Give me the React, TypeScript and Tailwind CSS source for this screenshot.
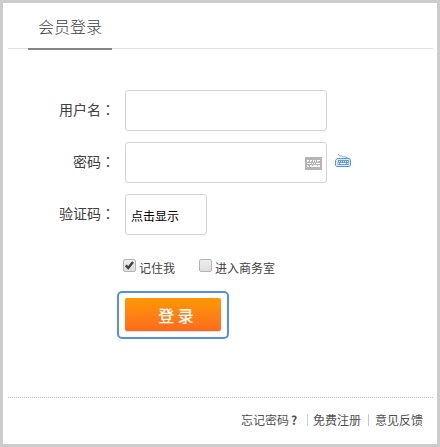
import { useState, type ReactNode } from 'react';

interface FieldProps {
  label: string;
  children: ReactNode;
}

function Field({ label, children }: FieldProps) {
  return (
    <div className="flex h-[41px] items-center">
      <span className="mr-[10px] w-[107px] pb-[4px] text-right text-[14px] leading-5 whitespace-nowrap">
        {label}
        <span lang="zh-TW" className="font-['Noto_Sans_CJK_TC',sans-serif]">：</span>
      </span>
      {children}
    </div>
  );
}

function PadIcon() {
  return (
    <svg width="17" height="13" viewBox="0 0 17 13" shapeRendering="crispEdges" className="mt-[2px]">
      <rect width="17" height="13" fill="#b5b5b5" />
      <path
        d="M2 3.5h2m1 0h2m1 0h1m1 0h1m1 0h3M2 4.5h1m2 0h1m2 0h1m1 0h1m1 0h1M2 6.5h4m1 0h1m1 0h1m1 0h4M2 9.5h2m1 0h10M2 8.5h1m2 0h2m1 0h4m1 0h2"
        stroke="#fff"
        fill="none"
      />
    </svg>
  );
}

function KeyboardIcon() {
  return (
    <svg width="17" height="14" viewBox="0 0 17 14">
      <path d="M3.5 0v1l1.5 1h2l1.5 1h2.500l1 .5v1" stroke="#76a9dd" fill="none" />
      <path d="M2 4.5h12.500l1 1.500v5l-1 1.500h-13l-1-1v-5z" fill="#dcebfb" stroke="#5b94d6" />
      <path d="M3 6h11l-.5 5h-11z" fill="#6699d6" />
      <path d="M4 7.500h1m1 0h1m1 0h1m1 0h1m1 0h1M3 9.500h1m1 0h6m1 0h1" stroke="#f3f9ff" fill="none" shapeRendering="crispEdges" />
    </svg>
  );
}

interface CheckProps {
  label: string;
  checked: boolean;
  onToggle: () => void;
}

function Check({ label, checked, onToggle }: CheckProps) {
  return (
    <button type="button" role="checkbox" aria-checked={checked} onClick={onToggle} className="flex">
      <span className="mr-[4px] flex h-[13px] w-[13px] items-center justify-center rounded-[2px] border border-[#b4b4b4] bg-linear-to-b from-[#eeeeee] to-[#dedede]">
        {checked && (
          <svg width="11" height="11" viewBox="0 0 11 11">
            <path d="M1.800 5.400l2.400 2.500L9 2" stroke="#404040" strokeWidth="2.400" fill="none" />
          </svg>
        )}
      </span>
      <span className="mt-[1px] -ml-px text-[12px] leading-4 whitespace-nowrap">{label}</span>
    </button>
  );
}

export default function App() {
  const [remember, setRemember] = useState(true);
  const [office, setOffice] = useState(false);

  return (
    <main className="flex h-[447px] w-[440px] flex-col border-3 border-[#cccccc] bg-white pr-[4px] pl-[5px] font-['Noto_Sans_CJK_SC',sans-serif] text-[#404040]">
      <header className="flex h-[46px] border-b border-[#e0e0e0] pl-5">
        <h1 className="h-[47px] w-[84px] shrink-0 border-b-2 border-[#858585] pt-[12px] text-center text-[16px] leading-[23px] font-light">
          会员登录
        </h1>
      </header>

      <form className="mt-[41px] flex flex-col gap-[11px]" onSubmit={(e) => e.preventDefault()}>
        <Field label="用户名">
          <input className="h-[41px] w-[202px] rounded-[3px] border border-[#d4d4d4] px-1.5 text-sm outline-none" />
        </Field>
        <Field label="密码">
          <div className="flex h-[41px] w-[202px] items-center rounded-[3px] border border-[#d4d4d4] pr-[4px]">
            <input type="password" className="h-full min-w-0 flex-1 px-1.5 text-sm outline-none" />
            <PadIcon />
          </div>
          <span className="mb-[3px] ml-[8px]">
            <KeyboardIcon />
          </span>
        </Field>
        <Field label="验证码">
          <input
            defaultValue="点击显示"
            className="h-[41px] w-[82px] rounded-[3px] border border-[#d4d4d4] px-[5px] pt-[1px] text-[12px] text-black outline-none"
          />
        </Field>

        <div className="mt-[13px] ml-[115px] flex h-[21px] gap-[24px]">
          <Check label="记住我" checked={remember} onToggle={() => setRemember(!remember)} />
          <Check label="进入商务室" checked={office} onToggle={() => setOffice(!office)} />
        </div>

        <div className="ml-[109px] flex h-[48px] w-[112px] justify-center rounded-[5px] border-2 border-[#5590d8] pt-[5px]">
          <button
            type="submit"
            className="h-[33px] w-[96px] rounded-[2px] bg-linear-to-b from-[#ff9900] to-[#ff6a1c] pl-[6px] text-[16px] leading-[32px] font-medium text-white shadow-[0_1px_1px_#dddddd]"
          >
            登&nbsp;录
          </button>
        </div>
      </form>

      <footer className="mt-[58px] flex items-center justify-end border-t border-dotted border-[#bcbcbc] pt-[14px] pr-[10px] text-[12px] leading-4 text-[#505050]">
        <a className="mr-[8px] flex">
          忘记密码<b className="w-[10px] text-center">?</b>
        </a>
        <span className="mr-[5px] h-3 w-px bg-[#b9dcc8]" />
        <a>免费注册</a>
        <span className="mr-[6px] ml-[7px] h-3 w-px bg-[#dcb8e4]" />
        <a>意见反馈</a>
      </footer>
    </main>
  );
}
